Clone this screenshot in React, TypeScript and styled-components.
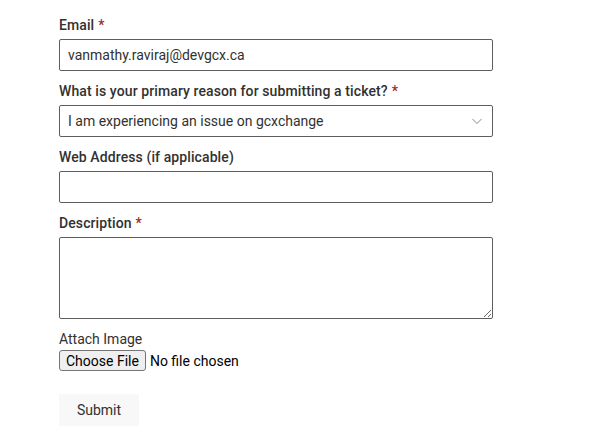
import React from "react";
import styled, { createGlobalStyle } from "styled-components";

const GlobalStyle = createGlobalStyle`
  html, body {
    margin: 0;
    padding: 0;
    background: #ffffff;
  }
  body {
    font-family: Roboto, "Noto Sans", sans-serif;
    color: #323130;
  }
`;

const Form = styled.form`
  display: flex;
  flex-direction: column;
  width: 434px;
  padding: 15px 0 0 59px;
`;

const Field = styled.div`
  display: flex;
  flex-direction: column;
  gap: 4px;
  margin-bottom: 10px;
`;

const Label = styled.label<{ $plain?: boolean }>`
  font-size: 14px;
  line-height: 20px;
  font-weight: ${(p) => (p.$plain ? 400 : 500)};
  letter-spacing: ${(p) => (p.$plain ? "0" : "0.1px")};
  color: #323130;
`;

const Required = styled.span`
  color: #a4262c;
  margin-left: 4px;
  font-weight: 500;
`;

const TextInput = styled.input`
  box-sizing: border-box;
  height: 32px;
  width: 100%;
  border: 1px solid #605e5c;
  border-radius: 2px;
  padding: 0 8px;
  font-family: Roboto, "Noto Sans", sans-serif;
  font-size: 14px;
  color: #323130;
  background: #fff;
  outline: none;
`;

const SelectBox = styled.div`
  box-sizing: border-box;
  height: 32px;
  width: 100%;
  border: 1px solid #605e5c;
  border-radius: 2px;
  padding: 0 7px 0 8px;
  display: flex;
  align-items: center;
  justify-content: space-between;
  font-size: 14px;
  color: #323130;
  background: #fff;
`;

const TextArea = styled.textarea`
  box-sizing: border-box;
  height: 82px;
  width: 100%;
  border: 1px solid #605e5c;
  border-radius: 2px;
  padding: 6px 8px;
  font-family: Roboto, "Noto Sans", sans-serif;
  font-size: 14px;
  resize: vertical;
  display: block;
  outline: none;
`;

const FileRow = styled.div`
  display: flex;
  align-items: center;
  gap: 4px;
  margin-top: -3px;
  font-size: 14px;
  color: #000;
`;

const FileButton = styled.span`
  box-sizing: border-box;
  height: 21px;
  padding: 0 6px;
  display: inline-flex;
  align-items: center;
  background: #efefef;
  border: 1px solid #767676;
  border-radius: 3px;
  font-size: 14px;
  color: #000;
`;

const SubmitButton = styled.button`
  box-sizing: border-box;
  margin-top: 13px;
  width: 80px;
  height: 32px;
  padding: 0;
  border: none;
  background: #f8f8f8;
  font-family: Roboto, "Noto Sans", sans-serif;
  font-size: 14px;
  color: #323130;
  cursor: pointer;
`;

const Chevron = () => (
  <svg width="16" height="16" viewBox="0 0 16 16" fill="none">
    <path d="M3.5 6 L8 10.5 L12.5 6" stroke="#8a8886" strokeWidth="1" />
  </svg>
);

export default function App() {
  return (
    <>
      <GlobalStyle />
      <Form onSubmit={(e) => e.preventDefault()}>
        <Field>
          <Label>
            Email<Required>*</Required>
          </Label>
          <TextInput defaultValue="vanmathy.raviraj@devgcx.ca" />
        </Field>
        <Field>
          <Label>
            What is your primary reason for submitting a ticket?<Required>*</Required>
          </Label>
          <SelectBox>
            <span>I am experiencing an issue on gcxchange</span>
            <Chevron />
          </SelectBox>
        </Field>
        <Field>
          <Label>Web Address (if applicable)</Label>
          <TextInput />
        </Field>
        <Field>
          <Label>
            Description<Required>*</Required>
          </Label>
          <TextArea />
        </Field>
        <Field>
          <Label $plain>Attach Image</Label>
          <FileRow>
            <FileButton>Choose File</FileButton>
            <span>No file chosen</span>
          </FileRow>
        </Field>
        <div>
          <SubmitButton type="submit">Submit</SubmitButton>
        </div>
      </Form>
    </>
  );
}
